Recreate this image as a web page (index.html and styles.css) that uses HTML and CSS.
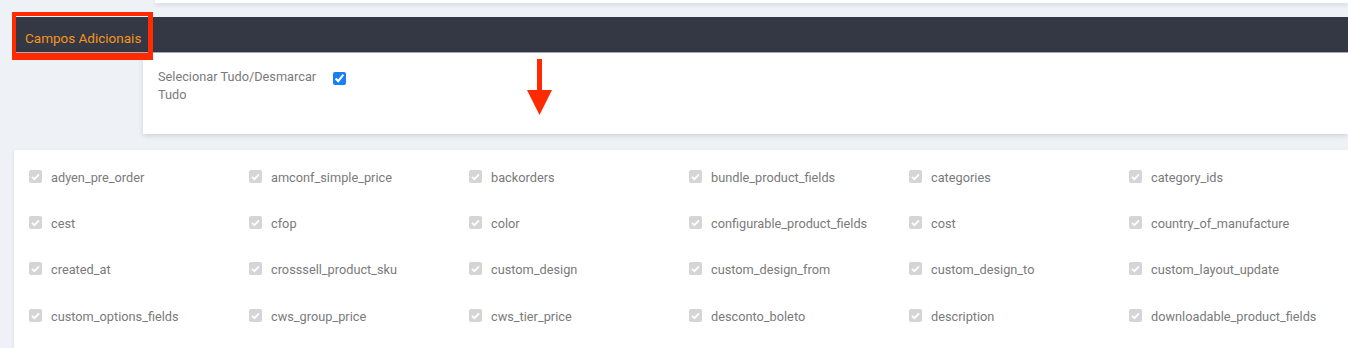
FILE: index.html
```html
<!DOCTYPE html>
<html lang="pt">

<head>
    <meta charset="UTF-8">
    <meta name="viewport" content="width=device-width, initial-scale=1.0">
    <title>Campos Adicionais</title>
    <link rel="stylesheet" href="styles.css">
</head>

<body>
    <div class="top-card"></div>

    <div class="tab-bar">
        <div class="tab">Campos Adicionais</div>
    </div>

    <div class="select-all">
        <label for="select-all">Selecionar Tudo/Desmarcar Tudo</label>
        <input type="checkbox" id="select-all" checked>
    </div>

    <!-- seta de anotação -->
    <svg class="arrow" width="26" height="56" viewBox="0 0 26 56">
        <rect x="10" y="0" width="5" height="32" fill="#ff2a00"/>
        <polygon points="0,31 25,31 12.5,56" fill="#ff2a00"/>
    </svg>

    <div class="fields">
        <div class="field"><span class="tick"></span>adyen_pre_order</div>
        <div class="field"><span class="tick"></span>amconf_simple_price</div>
        <div class="field"><span class="tick"></span>backorders</div>
        <div class="field"><span class="tick"></span>bundle_product_fields</div>
        <div class="field"><span class="tick"></span>categories</div>
        <div class="field"><span class="tick"></span>category_ids</div>

        <div class="field"><span class="tick"></span>cest</div>
        <div class="field"><span class="tick"></span>cfop</div>
        <div class="field"><span class="tick"></span>color</div>
        <div class="field"><span class="tick"></span>configurable_product_fields</div>
        <div class="field"><span class="tick"></span>cost</div>
        <div class="field"><span class="tick"></span>country_of_manufacture</div>

        <div class="field"><span class="tick"></span>created_at</div>
        <div class="field"><span class="tick"></span>crosssell_product_sku</div>
        <div class="field"><span class="tick"></span>custom_design</div>
        <div class="field"><span class="tick"></span>custom_design_from</div>
        <div class="field"><span class="tick"></span>custom_design_to</div>
        <div class="field"><span class="tick"></span>custom_layout_update</div>

        <div class="field"><span class="tick"></span>custom_options_fields</div>
        <div class="field"><span class="tick"></span>cws_group_price</div>
        <div class="field"><span class="tick"></span>cws_tier_price</div>
        <div class="field"><span class="tick"></span>desconto_boleto</div>
        <div class="field"><span class="tick"></span>description</div>
        <div class="field"><span class="tick"></span>downloadable_product_fields</div>
    </div>
</body>

</html>
```

FILE: styles.css
```css
body {
    font-family: Roboto, "Liberation Sans", Arial, sans-serif;
    margin: 0;
    background-color: #eef1f5;
    color: #7a7a7a;
    overflow: hidden;
    position: relative;
}

.top-card {
    margin-left: 155px;
    height: 3px;
    background: white;
    box-shadow: 0 2px 4px rgba(0, 0, 0, 0.12);
}

.tab-bar {
    margin: 14px 0 0 16px;
    height: 35px;
    background: #333844;
    border-bottom: 1px solid #a9adb5;
}

.tab {
    position: relative;
    display: inline-block;
    width: 132px;
    height: 35px;
    line-height: 42px;
    padding-left: 9px;
    box-sizing: border-box;
    font-size: 13.5px;
    color: #f7941d;
}

/* moldura vermelha da anotação */
.tab::after {
    content: '';
    position: absolute;
    top: -5px;
    left: -4px;
    right: -5px;
    bottom: -8px;
    border: 4px solid #ff2a00;
    border-right-width: 5px;
    border-bottom-width: 7px;
}

.select-all {
    display: flex;
    align-items: flex-start;
    margin-left: 143px;
    height: 81px;
    padding: 15px 15px 0;
    box-sizing: border-box;
    background: white;
    box-shadow: 0 2px 5px rgba(0, 0, 0, 0.12);
    font-size: 12.75px;
    line-height: 18px;
}

.select-all label {
    width: 172px;
}

.select-all input {
    margin: 4px 0 0 3px;
    width: 13px;
    height: 13px;
    accent-color: #1a7ef5;
}

.arrow {
    position: absolute;
    left: 527px;
    top: 59px;
}

.fields {
    margin: 16px 0 0 14px;
    padding: 4px 15px 20px;
    background: white;
    box-shadow: 0 1px 4px rgba(0, 0, 0, 0.08);
    display: grid;
    grid-template-columns: repeat(6, 220px);
    grid-auto-rows: 46.4px;
    font-size: 12.75px;
}

.field {
    display: flex;
    align-items: center;
    white-space: nowrap;
}

.tick {
    width: 13px;
    height: 13px;
    margin-right: 9px;
    border-radius: 2px;
    background: #d5d5d5 url("data:image/svg+xml,%3Csvg xmlns='http://www.w3.org/2000/svg' viewBox='0 0 13 13'%3E%3Cpath d='M3 6.8l2.4 2.4L10 4.4' fill='none' stroke='white' stroke-width='1.8'/%3E%3C/svg%3E") no-repeat center;
    flex-shrink: 0;
    position: relative;
    top: -1px;
}
```
